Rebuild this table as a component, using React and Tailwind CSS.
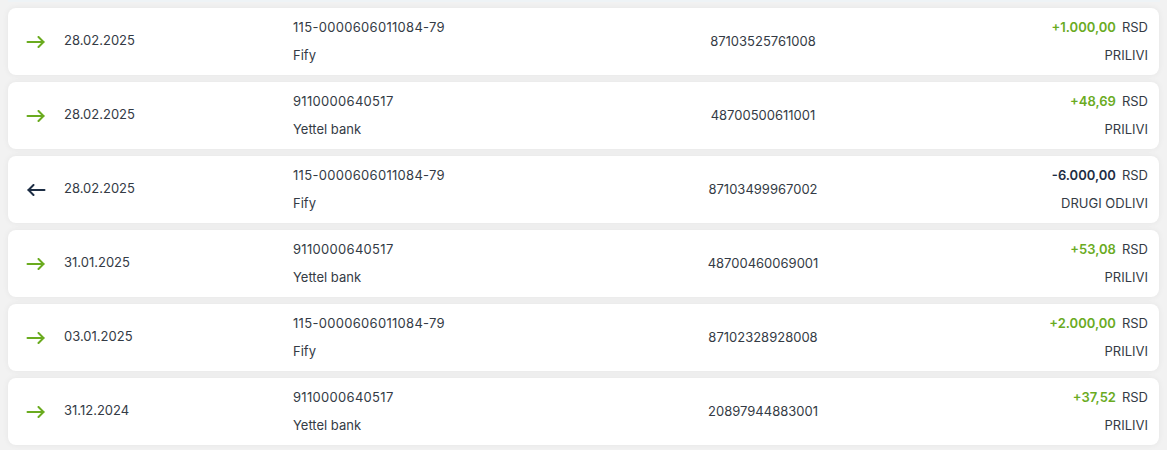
import React from "react";

const rows = [
  { dir: "in", date: "28.02.2025", acc: "115-0000606011084-79", name: "Fify", ref: "87103525761008", amount: "+1.000,00", type: "PRILIVI" },
  { dir: "in", date: "28.02.2025", acc: "9110000640517", name: "Yettel bank", ref: "48700500611001", amount: "+48,69", type: "PRILIVI" },
  { dir: "out", date: "28.02.2025", acc: "115-0000606011084-79", name: "Fify", ref: "87103499967002", amount: "-6.000,00", type: "DRUGI ODLIVI" },
  { dir: "in", date: "31.01.2025", acc: "9110000640517", name: "Yettel bank", ref: "48700460069001", amount: "+53,08", type: "PRILIVI" },
  { dir: "in", date: "03.01.2025", acc: "115-0000606011084-79", name: "Fify", ref: "87102328928008", amount: "+2.000,00", type: "PRILIVI" },
  { dir: "in", date: "31.12.2024", acc: "9110000640517", name: "Yettel bank", ref: "20897944883001", amount: "+37,52", type: "PRILIVI" },
];

function Arrow({ dir }) {
  if (dir === "in") {
    return (
      <svg width="20" height="12" viewBox="0 0 20 12" fill="none" stroke="#6aab1f" strokeWidth="2" strokeLinecap="round" strokeLinejoin="round">
        <path d="M1.5 6h16" />
        <path d="M12.5 1l5 5-5 5" />
      </svg>
    );
  }
  return (
    <svg width="20" height="12" viewBox="0 0 20 12" fill="none" stroke="#1d2d44" strokeWidth="2" strokeLinecap="round" strokeLinejoin="round">
      <path d="M18.5 6h-16" />
      <path d="M7.5 1l-5 5 5 5" />
    </svg>
  );
}

export default function App() {
  return (
    <div className="w-[1167px] h-[450px] bg-[#f2f2f2] overflow-hidden text-[13px] text-[#343b45]" style={{ fontFamily: "Inter, 'Noto Sans', sans-serif" }}>
      <div className="ml-[8px] mr-[7px] h-[2px] bg-[#eef3f6]" />
      <div className="flex flex-col gap-[7px] pt-[6px] px-[8px]">
        {rows.map((r, i) => (
          <div key={i} className="h-[67px] bg-white rounded-[8px] shadow-[0_0_6px_rgba(0,0,0,0.06)] flex items-center pl-[18px] pr-[11px]">
            <div className="w-[38px] flex items-center">
              <Arrow dir={r.dir} />
            </div>
            <div className="w-[229px] -mt-[2px]">{r.date}</div>
            <div className="w-[255px] flex flex-col gap-[9px]">
              <div className="tracking-[0.3px]">{r.acc}</div>
              <div>{r.name}</div>
            </div>
            <div className="flex-1 text-center">{r.ref}</div>
            <div className="w-[170px] flex flex-col items-end gap-[9px]">
              <div>
                <span className={r.dir === "in" ? "font-semibold text-[#6aab1f]" : "font-semibold text-[#1d2d44]"}>{r.amount}</span>
                <span className="ml-[6px]">RSD</span>
              </div>
              <div>{r.type}</div>
            </div>
          </div>
        ))}
      </div>
    </div>
  );
}
